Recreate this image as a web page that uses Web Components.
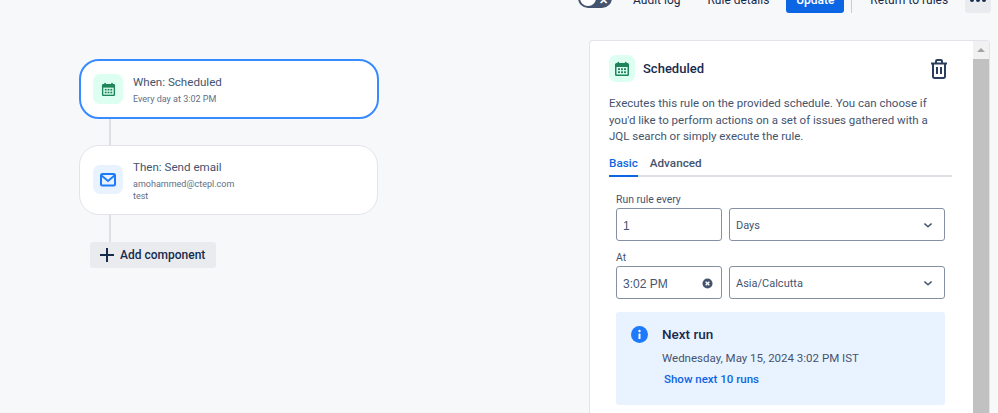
<!DOCTYPE html>
<html>
<head>
<meta charset="utf-8">
<style>
  html, body { margin: 0; height: 100%; overflow: hidden; background: #f7f8f9; }
  body { font-family: Roboto, "Liberation Sans", sans-serif; color: #172b4d; }
  .main { display: grid; grid-template-columns: 589px 401px; }
</style>
</head>
<body>
<rule-toolbar></rule-toolbar>
<div class="main">
  <rule-canvas>
    <rule-card kind="trigger" title-text="When: Scheduled" selected>
      <div>Every day at 3:02 PM</div>
    </rule-card>
    <rule-line></rule-line>
    <rule-card kind="action" title-text="Then: Send email">
      <div>amohammed@ctepl.com</div>
      <div>test</div>
    </rule-card>
    <rule-line style="height:27px"></rule-line>
    <add-button>Add component</add-button>
  </rule-canvas>
  <config-panel></config-panel>
</div>

<script>
const CALENDAR = `<svg viewBox="0 0 16 16" width="100%" height="100%" fill="none">
  <path d="M1 3.500a1.500 1.500 0 0 1 1.500-1.500h11A1.500 1.500 0 0 1 15 3.500v10a1.500 1.500 0 0 1-1.500 1.500h-11A1.500 1.500 0 0 1 1 13.500z" fill="#1f845a"/>
  <rect x="3.500" y="0.800" width="1.600" height="3" rx=".8" fill="#1f845a"/>
  <rect x="10.900" y="0.800" width="1.600" height="3" rx=".8" fill="#1f845a"/>
  <rect x="2.500" y="6" width="11" height="7.500" fill="#dcfff1"/>
  <g fill="#1f845a"><rect x="4" y="7.300" width="2" height="1.800"/><rect x="7" y="7.300" width="2" height="1.800"/><rect x="10" y="7.300" width="2" height="1.800"/><rect x="4" y="10.300" width="2" height="1.800"/><rect x="7" y="10.300" width="2" height="1.800"/><rect x="10" y="10.300" width="2" height="1.800"/></g>
</svg>`;

const CHEVRON = `<svg viewBox="0 0 10 6" width="8" height="5" fill="none"><path d="M1 1l4 3.600L9 1" stroke="#44546f" stroke-width="1.800" stroke-linecap="round" stroke-linejoin="round"/></svg>`;

class RuleToolbar extends HTMLElement {
  connectedCallback() {
    this.attachShadow({ mode: 'open' }).innerHTML = `
      <style>
        :host { display: flex; height: 13px; align-items: flex-end; font-size: 12px; color: #172b4d; }
        .toggle { margin-left: 578px; margin-bottom: 5px; width: 34px; height: 20px; border-radius: 10px; background: #44546f; position: relative; flex: none; }
        .knob { position: absolute; left: 2px; top: 2px; width: 16px; height: 16px; border-radius: 50%; background: #fff; }
        .x { position: absolute; right: 4px; bottom: 2px; color: #fff; font-size: 11px; line-height: 11px; font-weight: 700; }
        .link { white-space: nowrap; line-height: 16px; margin-bottom: 5px; flex: none; }
        .update { margin-left: 17px; width: 58px; height: 30px; background: #0c66e4; color: #fff; border-radius: 3px; font-weight: 500; display: flex; align-items: flex-end; justify-content: center; padding-bottom: 5px; box-sizing: border-box; line-height: 16px; flex: none; }
        .sep { margin-left: 7px; width: 1px; height: 13px; background: #c9ced6; flex: none; }
        .more { margin-left: 17px; width: 26px; height: 30px; background: #e9ebee; border-radius: 3px; display: flex; align-items: flex-end; justify-content: center; gap: 2px; padding-bottom: 11px; box-sizing: border-box; flex: none; }
        .more i { width: 4px; height: 4px; border-radius: 50%; background: #172b4d; }
      </style>
      <div class="toggle"><div class="knob"></div><div class="x">✕</div></div>
      <div class="link" style="margin-left:21px">Audit log</div>
      <div class="link" style="margin-left:27px">Rule details</div>
      <div class="update">Update</div>
      <div class="sep"></div>
      <div class="link" style="margin-left:18px">Return to rules</div>
      <div class="more"><i></i><i></i><i></i></div>`;
  }
}

class RuleCanvas extends HTMLElement {
  connectedCallback() {
    this.attachShadow({ mode: 'open' }).innerHTML = `
      <style>:host { display: flex; flex-direction: column; align-items: flex-start; padding: 46px 0 0 79px; }</style>
      <slot></slot>`;
  }
}

class RuleCard extends HTMLElement {
  connectedCallback() {
    const action = this.getAttribute('kind') === 'action';
    const selected = this.hasAttribute('selected');
    const icon = action
      ? `<svg viewBox="0 0 16 14" width="16" height="14" fill="none"><rect x="1" y="1" width="14" height="11.500" rx="1.500" stroke="#1d7afc" stroke-width="2"/><path d="M1.500 2.500L8 8l6.500-5.500" stroke="#1d7afc" stroke-width="1.800"/></svg>`
      : `<div style="width:15px;height:15px">${CALENDAR}</div>`;
    this.attachShadow({ mode: 'open' }).innerHTML = `
      <style>
        :host { display: flex; box-sizing: border-box; width: ${selected ? 300 : 299}px; height: ${selected ? 60 : 70}px; background: #fff; border-radius: 20px; border: ${selected ? '2px solid #388bff' : '1px solid #e2e4e9'}; padding: ${selected ? '13px 0 0 12px' : '19px 0 0 13px'}; gap: 10px; }
        .icon { width: 30px; height: ${action ? 29 : 30}px; border-radius: 7px; background: ${action ? '#e9f2ff' : '#dcfff1'}; display: flex; align-items: center; justify-content: center; flex: none; }
        .body { margin-top: ${action ? -6 : 0}px; }
        .title { font-size: 11.600px; line-height: 17px; color: #44546f; margin-bottom: 2px; }
        .sub { font-size: 9px; line-height: 12px; color: #626f86; }
      </style>
      <div class="icon">${icon}</div>
      <div class="body">
        <div class="title">${this.getAttribute('title-text')}</div>
        <div class="sub"><slot></slot></div>
      </div>`;
  }
}

class RuleLine extends HTMLElement {
  connectedCallback() {
    this.attachShadow({ mode: 'open' }).innerHTML = `
      <style>:host { display: block; width: 2px; height: 26px; margin-left: 30px; background: #dcdfe4; }</style>`;
  }
}

class AddButton extends HTMLElement {
  connectedCallback() {
    this.attachShadow({ mode: 'open' }).innerHTML = `
      <style>
        :host { display: flex; align-items: center; gap: 5px; box-sizing: border-box; width: 126px; height: 26px; margin-left: 11px; padding-left: 9px; background: #e9ebee; border-radius: 3px; font-size: 12px; font-weight: 500; color: #172b4d; white-space: nowrap; }
      </style>
      <svg viewBox="0 0 16 16" width="16" height="16"><path d="M8 1v14M1 8h14" stroke="#172b4d" stroke-width="2"/></svg>
      <slot></slot>`;
  }
}

class FormField extends HTMLElement {
  connectedCallback() {
    const width = this.getAttribute('width');
    const wide = this.hasAttribute('wide');
    this.attachShadow({ mode: 'open' }).innerHTML = `
      <style>
        :host { display: flex; align-items: center; justify-content: space-between; box-sizing: border-box; height: 33px; width: ${width}px; flex: none; padding: 2px ${wide ? '12px 0 6px' : '8px 0 6px'}; background: #fff; border: 1px solid #8590a2; border-radius: 3px; color: #44546f; font: ${wide ? '11px Roboto' : '12px "Liberation Sans"'}, sans-serif; }
      </style>
      <slot></slot>`;
  }
}

class InfoBox extends HTMLElement {
  connectedCallback() {
    this.attachShadow({ mode: 'open' }).innerHTML = `
      <style>
        :host { display: flex; gap: 14px; box-sizing: border-box; width: 329px; height: 93px; padding: 14px 0 0 15px; background: #e9f2ff; border-radius: 3px; }
        .head { font-size: 13.500px; font-weight: 500; line-height: 16px; color: #172b4d; margin-bottom: 8px; }
        .date { font-size: 11.500px; line-height: 16px; color: #44546f; margin-bottom: 5px; white-space: nowrap; }
        .more { font-size: 11.500px; line-height: 16px; font-weight: 500; color: #0c66e4; margin-left: 2px; }
        svg { flex: none; }
      </style>
      <svg viewBox="0 0 17 17" width="17" height="17"><circle cx="8.500" cy="8.500" r="8.500" fill="#1d7afc"/><rect x="7.500" y="7.500" width="2" height="5.500" rx=".5" fill="#fff"/><circle cx="8.500" cy="5" r="1.200" fill="#fff"/></svg>
      <div>
        <div class="head">Next run</div>
        <div class="date">Wednesday, May 15, 2024 3:02 PM IST</div>
        <div class="more">Show next 10 runs</div>
      </div>`;
  }
}

class ConfigPanel extends HTMLElement {
  connectedCallback() {
    this.attachShadow({ mode: 'open' }).innerHTML = `
      <style>
        :host { display: flex; box-sizing: border-box; height: 373px; margin-top: 27px; background: #fff; border: 1px solid #e2e4e9; border-bottom: 0; border-radius: 4px 4px 0 0; overflow: hidden; }
        .content { flex: 1; min-width: 0; padding: 14px 21px 0 19px; }
        .head { display: flex; align-items: center; height: 27px; }
        .badge { width: 26px; height: 27px; border-radius: 7px; background: #dcfff1; display: flex; align-items: center; justify-content: center; flex: none; }
        .badge div { width: 16px; height: 16px; }
        h2 { margin: 0 0 0 8px; flex: 1; font-size: 13px; font-weight: 500; color: #172b4d; }
        .desc { margin: 13px 0 0; font-size: 11.500px; line-height: 16.500px; color: #44546f; white-space: nowrap; }
        .tabs { display: flex; gap: 12px; margin-top: 10px; height: 20.500px; border-bottom: 2px solid #dcdfe4; font-size: 11.700px; font-weight: 500; line-height: 17px; color: #44546f; }
        .tabs .on { color: #0c66e4; height: 22.500px; box-sizing: border-box; border-bottom: 2px solid #0c66e4; }
        .form { padding: 0 7px; }
        label { display: block; font-size: 10.400px; line-height: 14px; color: #44546f; }
        .row { display: flex; gap: 7px; }
        .scrollbar { width: 16px; background: #f1f1f1; flex: none; display: flex; flex-direction: column; align-items: center; }
        .up { height: 18px; width: 100%; display: flex; align-items: center; justify-content: center; }
        .up i { width: 0; height: 0; border: 4px solid transparent; border-top: 0; border-bottom: 4px solid #a3a3a3; }
        .thumb { flex: 1; width: 100%; background: #c1c1c1; }
        .clear { width: 11px; height: 11px; flex: none; }
      </style>
      <div class="content">
        <div class="head">
          <div class="badge"><div>${CALENDAR}</div></div>
          <h2>Scheduled</h2>
          <svg viewBox="0 0 18 20" width="18" height="20" fill="none" style="margin-right:4px">
            <path d="M1 4.500h16M6 4.500V2.200C6 1.500 6.500 1 7.200 1h3.600c.7 0 1.200.5 1.200 1.200v2.300" stroke="#2c3e5d" stroke-width="2"/>
            <path d="M3 4.500v12.800c0 .9.700 1.700 1.700 1.700h8.600c1 0 1.700-.8 1.700-1.700V4.500" stroke="#2c3e5d" stroke-width="2"/>
            <path d="M7 8v7M11 8v7" stroke="#2c3e5d" stroke-width="2"/>
          </svg>
        </div>
        <p class="desc">Executes this rule on the provided schedule. You can choose if<br>you'd like to perform actions on a set of issues gathered with a<br>JQL search or simply execute the rule.</p>
        <div class="tabs"><div class="on">Basic</div><div>Advanced</div></div>
        <div class="form">
          <label style="margin-top:16px;margin-bottom:1px">Run rule every</label>
          <div class="row">
            <form-field width="106">1</form-field>
            <form-field width="216" wide>Days ${CHEVRON}</form-field>
          </div>
          <label style="margin-top:10px;margin-bottom:1px">At</label>
          <div class="row">
            <form-field width="106">3:02 PM
              <svg class="clear" viewBox="0 0 12 12"><circle cx="6" cy="6" r="5.500" fill="#44546f"/><path d="M4 4l4 4M8 4l-4 4" stroke="#fff" stroke-width="1.500"/></svg>
            </form-field>
            <form-field width="216" wide>Asia/Calcutta ${CHEVRON}</form-field>
          </div>
          <info-box style="margin-top:13px"></info-box>
        </div>
      </div>
      <div class="scrollbar"><div class="up"><i></i></div><div class="thumb"></div></div>`;
  }
}

customElements.define('rule-toolbar', RuleToolbar);
customElements.define('rule-canvas', RuleCanvas);
customElements.define('rule-card', RuleCard);
customElements.define('rule-line', RuleLine);
customElements.define('add-button', AddButton);
customElements.define('form-field', FormField);
customElements.define('info-box', InfoBox);
customElements.define('config-panel', ConfigPanel);
</script>
</body>
</html>
